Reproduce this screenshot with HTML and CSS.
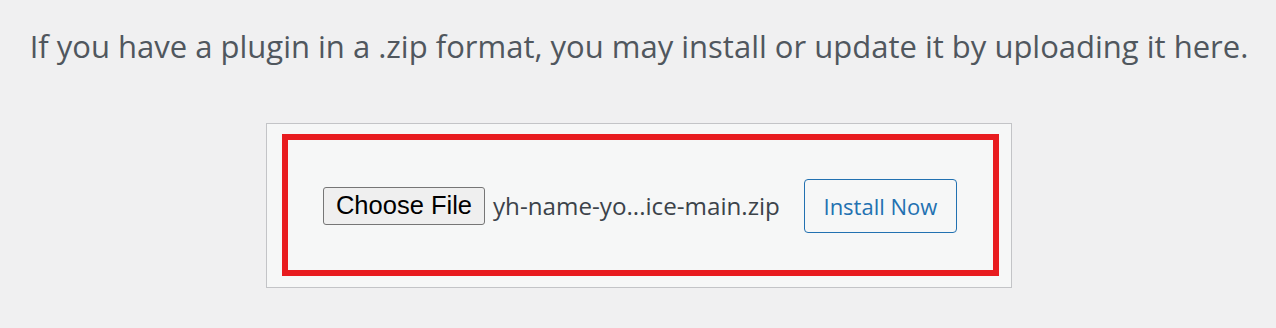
FILE: index.html
```html
<!DOCTYPE html>
<html lang="en">
<head>
<meta charset="utf-8">
<title>Upload Plugin</title>
<link rel="stylesheet" href="styles.css">
</head>
<body>
<div class="wrap">
  <p class="install-help">If you have a plugin in a .zip format, you may install or update it by uploading it here.</p>
  <div class="upload-box">
    <form class="upload-form">
      <button type="button" class="file-btn">Choose File</button>
      <span class="file-name">yh-name-yo...ice-main.zip</span>
      <button type="button" class="install-btn">Install Now</button>
    </form>
  </div>
</div>
</body>
</html>
```

FILE: styles.css
```css
html, body {
  margin: 0;
  padding: 0;
  background: #f0f0f1;
}
body {
  font-family: "Open Sans", "Noto Sans", sans-serif;
  color: #50575e;
}
.wrap {
  display: flex;
  flex-direction: column;
  align-items: center;
  padding-top: 24px;
}
.install-help {
  margin: 0 0 0 2px;
  font-size: 31px;
  line-height: 44px;
  color: #50575e;
  text-align: center;
  white-space: nowrap;
}
.upload-box {
  margin-top: 55px;
  margin-left: 2px;
  width: 746px;
  box-sizing: border-box;
  border: 1px solid #c3c4c7;
  background: #f6f7f7;
  padding: 10px 12px 11px 15px;
}
.upload-form {
  display: flex;
  align-items: center;
  height: 142px;
  box-sizing: border-box;
  border: 6px solid #e81c1f;
  padding-left: 35px;
  padding-top: 1px;
}
.file-btn {
  width: 162px;
  height: 38px;
  box-sizing: border-box;
  background: #efefef;
  border: 1px solid #767676;
  border-radius: 3px;
  font-family: "Liberation Sans", Arial, sans-serif;
  font-size: 25.5px;
  color: #000;
  padding: 0;
}
.file-name {
  margin-left: 8px;
  font-size: 24.2px;
  color: #3c434a;
}
.install-btn {
  margin-left: 24px;
  width: 153px;
  height: 54px;
  box-sizing: border-box;
  background: #f6f7f7;
  border: 1px solid #2271b1;
  border-radius: 4px;
  color: #2271b1;
  font-family: "Open Sans", "Noto Sans", sans-serif;
  font-size: 22px;
  padding: 0;
}
```
